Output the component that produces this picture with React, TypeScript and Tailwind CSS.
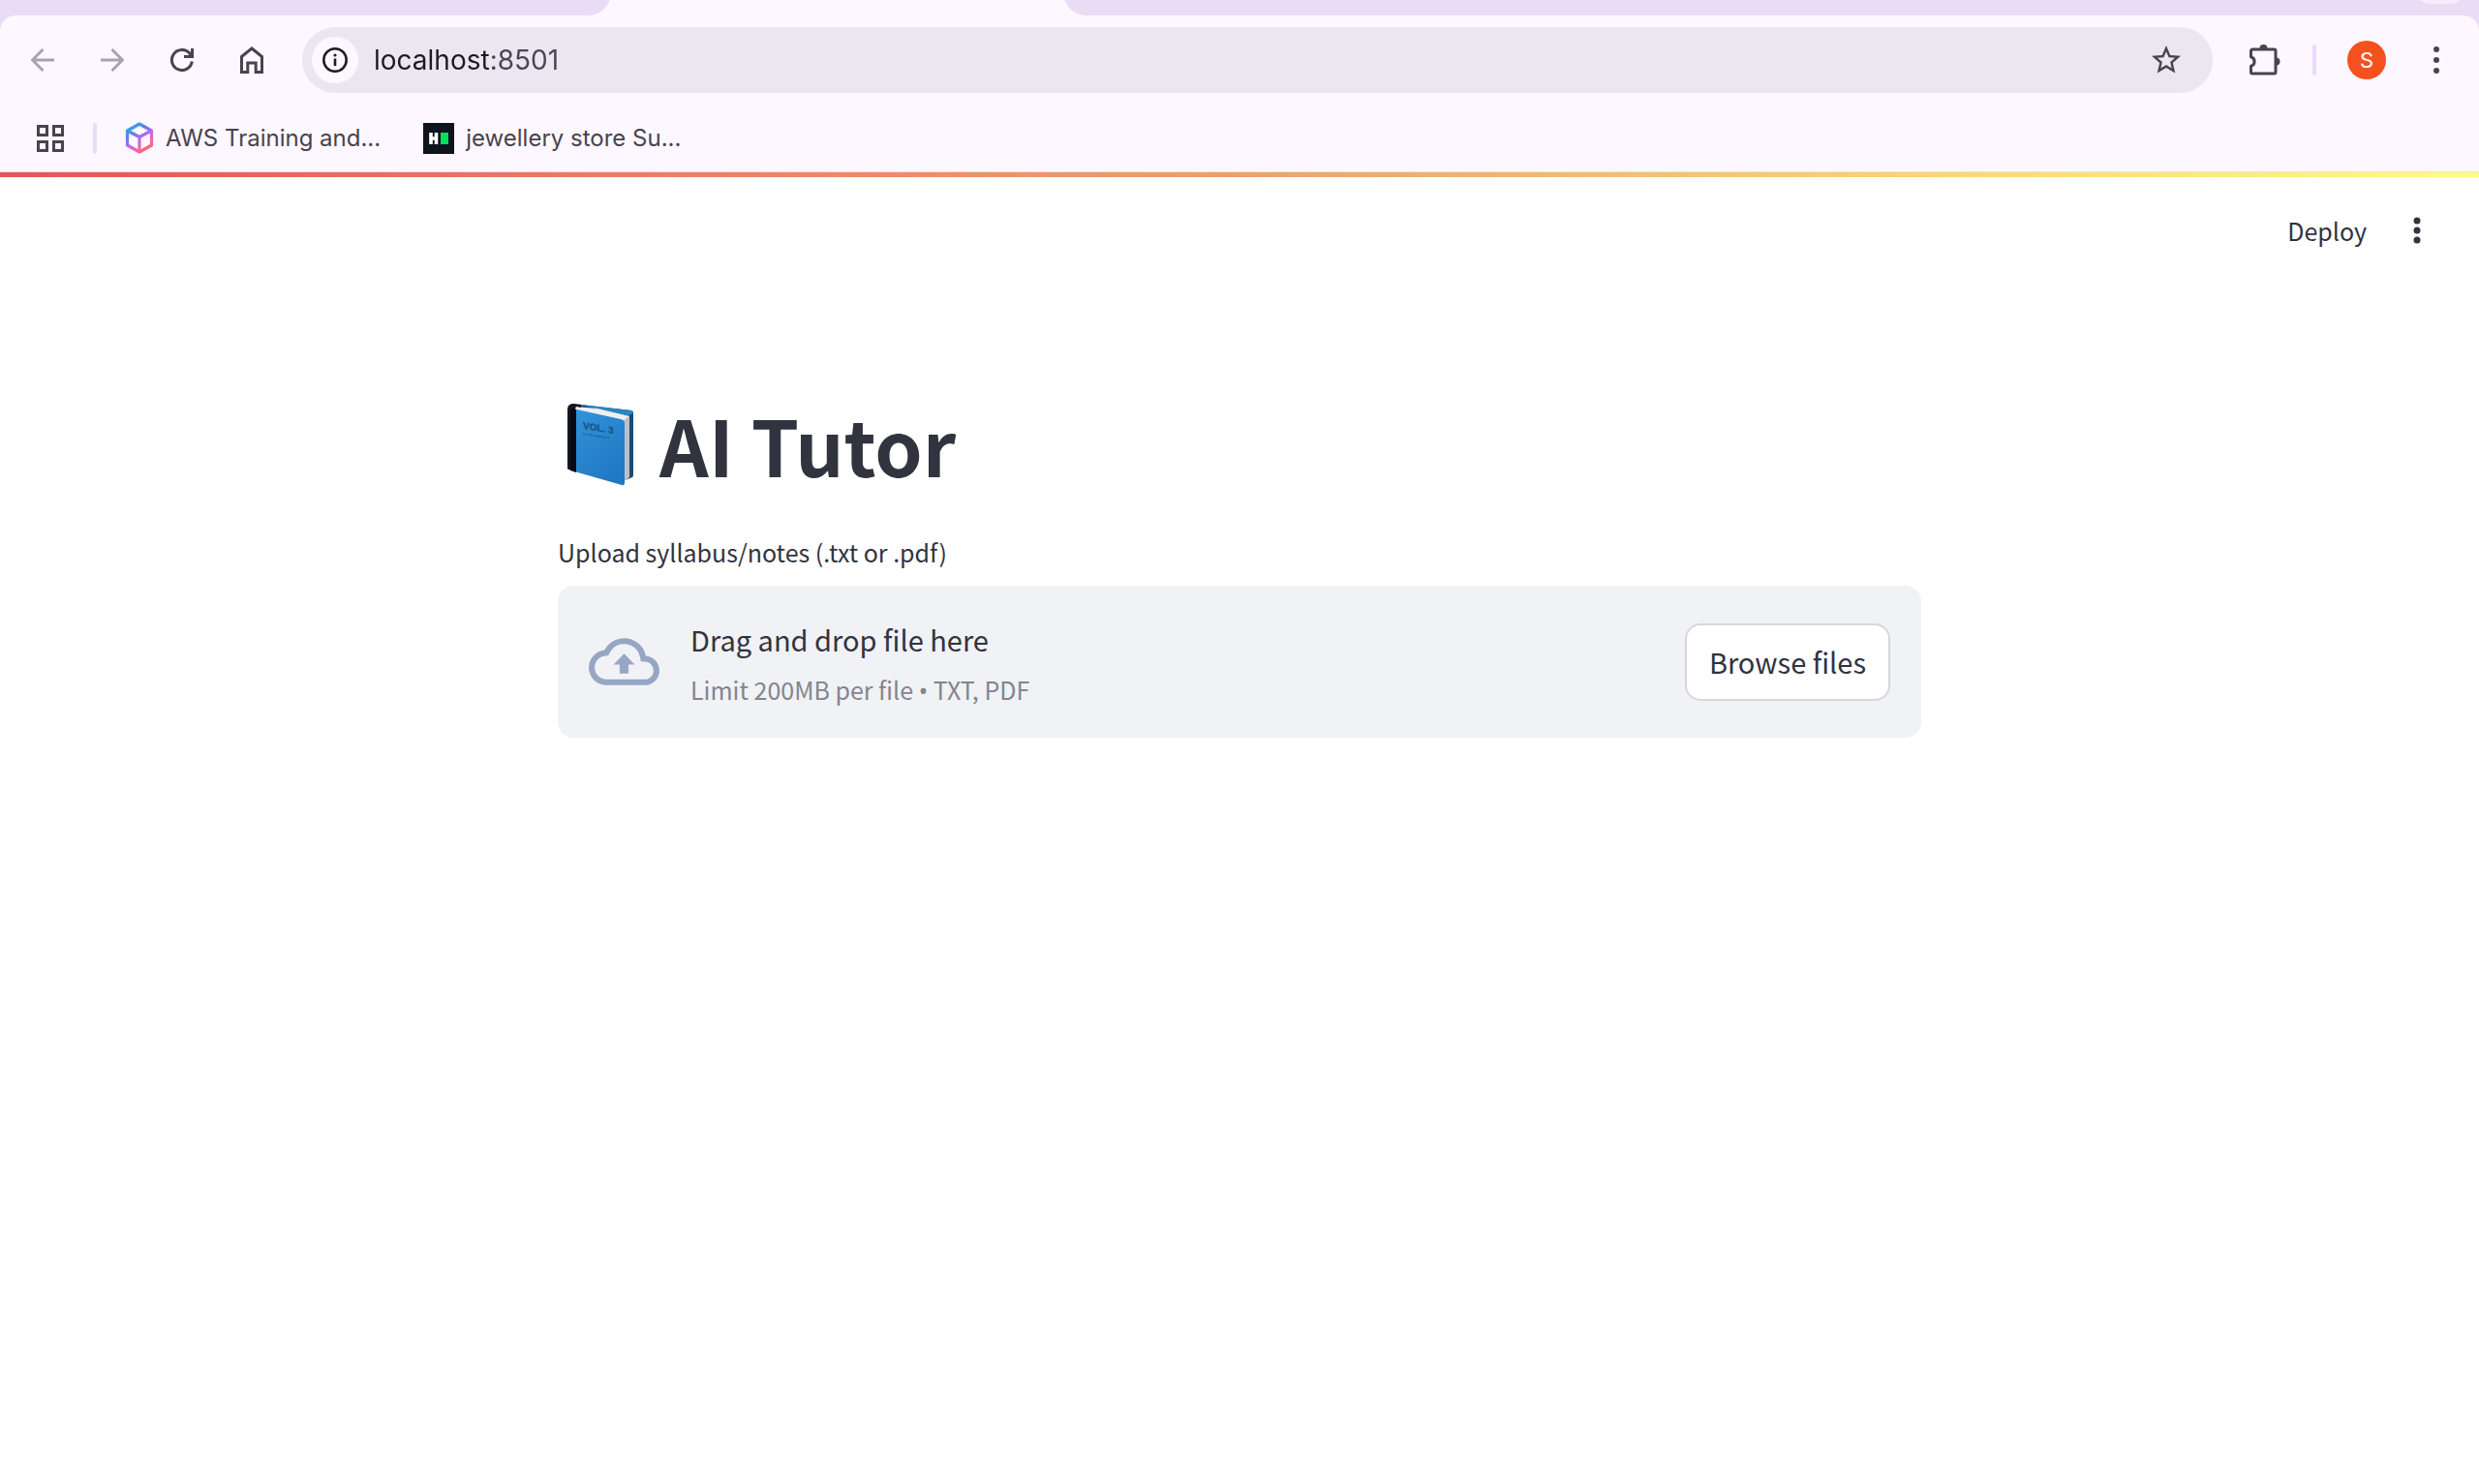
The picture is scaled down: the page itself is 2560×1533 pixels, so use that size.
import React, { useRef } from "react";

const stroke = {
  fill: "none",
  stroke: "currentColor",
  strokeWidth: 3,
} as const;

function BackIcon() {
  return (
    <svg viewBox="0 0 24 24" className="size-6" {...stroke} aria-hidden="true">
      <path d="M24 12H2M12.500 1 1.500 12l11 11" />
    </svg>
  );
}

function ForwardIcon() {
  return (
    <svg viewBox="0 0 24 24" className="size-6" {...stroke} aria-hidden="true">
      <path d="M0 12h22M11.500 1l11 11-11 11" />
    </svg>
  );
}

function ReloadIcon() {
  return (
    <svg viewBox="0 0 24 24" className="size-6" {...stroke} aria-hidden="true">
      <path d="M22.300 13.500A10.500 10.500 0 1 1 20 5.300l2 2.700" />
      <path d="M22.500 0v8.500H14" />
    </svg>
  );
}

function HomeIcon() {
  return (
    <svg viewBox="0 0 24 28" className="h-7 w-6" {...stroke} aria-hidden="true">
      <path d="M1.500 26.500V10.500L12 2l10.500 8.500v16h-6.300V17H7.800v9.500z" />
    </svg>
  );
}

function InfoIcon() {
  return (
    <svg viewBox="0 0 26 26" className="size-[26px]" fill="none" aria-hidden="true">
      <circle cx="13" cy="13" r="11.700" stroke="currentColor" strokeWidth="2.500" />
      <path d="M13 11.500V19" stroke="currentColor" strokeWidth="2.600" />
      <circle cx="13" cy="8" r="1.600" fill="currentColor" />
    </svg>
  );
}

function StarIcon() {
  return (
    <svg viewBox="0 0 24 24" className="size-9" fill="currentColor" aria-hidden="true">
      <path d="m22 9.240-7.190-.620L12 2 9.190 8.630 2 9.240l5.460 4.730L5.820 21 12 17.270 18.180 21l-1.630-7.030zM12 15.400l-3.760 2.270 1-4.280-3.320-2.880 4.380-.38L12 6.100l1.710 4.040 4.380.38-3.320 2.880 1 4.280z" />
    </svg>
  );
}

function PuzzleIcon() {
  return (
    <svg viewBox="0 0 33 33" className="size-[33px]" aria-hidden="true">
      <path
        d="M3 5h22.500a1.500 1.500 0 0 1 1.500 1.500v22a1.500 1.500 0 0 1-1.500 1.500H3a1.500 1.500 0 0 1-1.500-1.500v-6.200a5 5 0 0 0 0-9.600V6.500A1.500 1.500 0 0 1 3 5z"
        fill="none"
        stroke="currentColor"
        strokeWidth="3"
        strokeLinejoin="round"
      />
      <path d="M10.500 4a4 4 0 0 1 8 0zM27.500 13.500a4 4 0 0 1 0 8z" fill="currentColor" />
    </svg>
  );
}

function BrowserMenuIcon() {
  return (
    <svg viewBox="0 0 8 30" className="h-[30px] w-2" fill="currentColor" aria-hidden="true">
      <circle cx="4" cy="4" r="3" />
      <circle cx="4" cy="15" r="3" />
      <circle cx="4" cy="26" r="3" />
    </svg>
  );
}

function AppMenuIcon() {
  return (
    <svg viewBox="0 0 8 28" className="h-7 w-2" fill="currentColor" aria-hidden="true">
      <circle cx="4" cy="4" r="3.500" />
      <circle cx="4" cy="14" r="3.500" />
      <circle cx="4" cy="24" r="3.500" />
    </svg>
  );
}

function AppsIcon() {
  return (
    <svg viewBox="0 0 28 28" className="size-7" {...stroke} aria-hidden="true">
      <path d="M1.500 1.500h9v9h-9zM17.500 1.500h9v9h-9zM1.500 17.500h9v9h-9zM17.500 17.500h9v9h-9z" />
    </svg>
  );
}

function CubeIcon() {
  return (
    <svg viewBox="0 0 30 33" className="h-[33px] w-[30px]" fill="none" aria-hidden="true">
      <defs>
        <linearGradient id="cube" x1="5" y1="2" x2="24" y2="32" gradientUnits="userSpaceOnUse">
          <stop offset="0" stopColor="#22b3d6" />
          <stop offset=".3" stopColor="#5f7df0" />
          <stop offset=".55" stopColor="#c467ee" />
          <stop offset=".75" stopColor="#f565a5" />
          <stop offset="1" stopColor="#fb6a45" />
        </linearGradient>
      </defs>
      <g stroke="url(#cube)" strokeWidth="3.200" strokeLinejoin="round">
        <path d="M15 2l12.500 7v15L15 31 2.500 24V9z" />
        <path d="M2.500 9 15 15.500 27.500 9M15 15.500V31" />
      </g>
    </svg>
  );
}

function HackerIcon() {
  return (
    <svg viewBox="0 0 32 32" className="size-8" aria-hidden="true">
      <path fill="#0e141e" d="M0 0h32v32H0z" />
      <path d="M8 10v12M13.500 10v12M8 16h5.500" stroke="#fff" strokeWidth="3.600" />
      <path fill="#05e05c" d="M18 10h8v12h-8z" />
    </svg>
  );
}

function CloudUploadIcon() {
  return (
    <svg viewBox="0 0 24 24" className="size-[73px]" fill="currentColor" aria-hidden="true">
      <path d="M19.350 10.040A7.490 7.490 0 0 0 12 4C9.110 4 6.600 5.640 5.350 8.040A5.994 5.994 0 0 0 0 14c0 3.310 2.690 6 6 6h13c2.760 0 5-2.240 5-5 0-2.640-2.050-4.780-4.650-4.960zM19 18H6c-2.210 0-4-1.790-4-4 0-2.050 1.530-3.760 3.560-3.970l1.070-.11.500-.95A5.469 5.469 0 0 1 12 6c2.620 0 4.880 1.860 5.390 4.430l.3 1.500 1.530.11A2.980 2.980 0 0 1 22 15c0 1.650-1.350 3-3 3z" />
      <path d="M8.400 13h2.100v3h3v-3h2.100L12 9.300z" />
    </svg>
  );
}

function BookIcon() {
  return (
    <svg viewBox="0 0 70 86" className="h-[86px] w-[70px]" role="img" aria-label="Blue book">
      <defs>
        <linearGradient id="cover" x1="0" y1="0" x2=".6" y2="1">
          <stop offset="0" stopColor="#3294dc" />
          <stop offset="1" stopColor="#2179c2" />
        </linearGradient>
        <linearGradient id="pages" x1="0" y1="0" x2="1" y2="0">
          <stop offset="0" stopColor="#f4f5f7" />
          <stop offset="1" stopColor="#b9bcc4" />
        </linearGradient>
      </defs>
      <path d="M5 1 67 8q2 .5 2 2.500V75q0 2-2 2.500l-8 3L8 68z" fill="#174d78" />
      <path d="M12 1.500 67 8q2 .5 2 2.500l-5 3L30 6z" fill="#2c84bd" />
      <path d="M8 4l26 3 31 7v63l-7 5-5-60z" fill="url(#pages)" />
      <path d="M8 4l24 2 33 8-6 4L10 8z" fill="#eceef1" />
      <path d="M6 6l50 11q4 1 4 4v62q0 3-3 2L8 71z" fill="url(#cover)" />
      <path d="M1 7q0-6 6-6l8 1v3l-4-1q-2 0-2 3v64l-7-2q-1 0-1-2z" fill="#15171f" />
      <path d="M4 8q1-3 5-2l1 2v64l-6-2z" fill="#070914" />
      <g transform="translate(17 27) skewY(9)" fill="#16558c" fontFamily="Liberation Sans, sans-serif">
        <text fontSize="10" stroke="#16558c" strokeWidth=".3">VOL. 3</text>
        <text y="6" fontSize="3">by John Appleseed</text>
      </g>
    </svg>
  );
}

export default function App() {
  const fileInput = useRef<HTMLInputElement>(null);

  return (
    <div className="flex min-h-screen flex-col bg-white font-['Noto_Sans_CJK_SC','Noto_Sans',sans-serif] text-[#31333f]">
      <header className="bg-[#eadcf4] font-[Inter,sans-serif] text-[#48434d]">
        <div className="relative flex h-4 overflow-hidden bg-[#fdf7ff]" aria-hidden="true">
          <div className="-mt-8 h-12 w-[631px] rounded-br-3xl bg-[#eadcf4]" />
          <div className="-mt-8 ml-[467px] h-12 grow rounded-bl-3xl bg-[#eadcf4]" />
          <div className="absolute -top-11 right-[14px] h-12 w-[52px] rounded-2xl bg-[#f7ecfe]" />
        </div>

        <div className="rounded-t-2xl border-b border-[#e9e1ee] bg-[#fdf7ff]">
          <div className="flex items-center pt-3 pr-10 pl-8">
            <nav className="flex items-center gap-12" aria-label="Browser navigation">
              <button type="button" aria-label="Back" className="text-[#a9a3ad]">
                <BackIcon />
              </button>
              <button type="button" aria-label="Forward" className="text-[#a9a3ad]">
                <ForwardIcon />
              </button>
              <button type="button" aria-label="Reload">
                <ReloadIcon />
              </button>
              <button type="button" aria-label="Home">
                <HomeIcon />
              </button>
            </nav>

            <div className="ml-10 flex h-[68px] grow items-center rounded-full bg-[#ece6f1] pr-[30px] pl-[10px]">
              <button
                type="button"
                aria-label="Site information"
                className="flex size-12 items-center justify-center rounded-full bg-[#fdf7ff] text-[#1d1b20]"
              >
                <InfoIcon />
              </button>
              <input
                type="text"
                aria-label="Address"
                defaultValue="localhost:8501"
                className="ml-4 min-w-0 grow bg-[linear-gradient(90deg,#1d1b20_120px,#4a4550_120px)] bg-clip-text text-[28px] leading-10 text-transparent outline-none"
              />
              <button type="button" aria-label="Bookmark this page">
                <StarIcon />
              </button>
            </div>

            <div className="ml-[38px] flex items-center">
              <button type="button" aria-label="Extensions">
                <PuzzleIcon />
              </button>
              <span className="ml-8 h-8 w-1 rounded-full bg-[#e8dcf8]" />
              <button
                type="button"
                aria-label="Profile"
                className="ml-8 flex size-10 items-center justify-center rounded-full bg-[#f4511e] text-[22px] text-white"
              >
                S
              </button>
              <button type="button" aria-label="Browser menu" className="ml-12">
                <BrowserMenuIcon />
              </button>
            </div>
          </div>

          <div className="flex h-[81px] items-center px-[38px] pt-3 text-2xl">
            <button type="button" aria-label="Apps">
              <AppsIcon />
            </button>
            <span className="ml-[30px] h-8 w-1 rounded-full bg-[#e8dcf8]" />
            <a href="#aws" className="ml-[29px] flex items-center gap-3">
              <CubeIcon />
              AWS Training and...
            </a>
            <a href="#jewellery" className="ml-11 flex items-center gap-3">
              <HackerIcon />
              jewellery store Su...
            </a>
          </div>
        </div>
      </header>

      <div className="h-[5px] bg-linear-to-r from-[#e05858] via-[#eea070] to-[#fffd80]" />

      <div className="flex h-[110px] items-center justify-end gap-12 pr-[60px]">
        <button type="button" className="text-[25px] leading-10">
          Deploy
        </button>
        <button type="button" aria-label="App menu">
          <AppMenuIcon />
        </button>
      </div>

      <main className="mx-auto w-full max-w-[1408px] pt-[106px]">
        <h1 className="flex items-center gap-[26px] pl-[9px] text-[79px] leading-[120px] font-bold">
          <BookIcon />
          AI Tutor
        </h1>

        <label htmlFor="syllabus" className="mt-[31px] block text-[25px] leading-10">
          Upload syllabus/notes (.txt or .pdf)
        </label>
        <section className="mt-[15px] flex items-center rounded-2xl bg-[#f0f2f6] px-8 py-[26px]">
          <span className="text-[#98a6c6]">
            <CloudUploadIcon />
          </span>
          <div className="ml-8 flex grow flex-col">
            <span className="text-[29px] leading-[58px]">Drag and drop file here</span>
            <span className="text-[25px] leading-[46px] text-[#83858c]">
              Limit 200MB per file <span className="font-['Noto_Sans']">•</span> TXT, PDF
            </span>
          </div>
          <input ref={fileInput} id="syllabus" type="file" accept=".txt,.pdf" className="hidden" />
          <button
            type="button"
            onClick={() => fileInput.current?.click()}
            className="h-20 rounded-2xl border-2 border-[#d6d7db] bg-white px-[23px] text-[29px]"
          >
            Browse files
          </button>
        </section>
      </main>
    </div>
  );
}
